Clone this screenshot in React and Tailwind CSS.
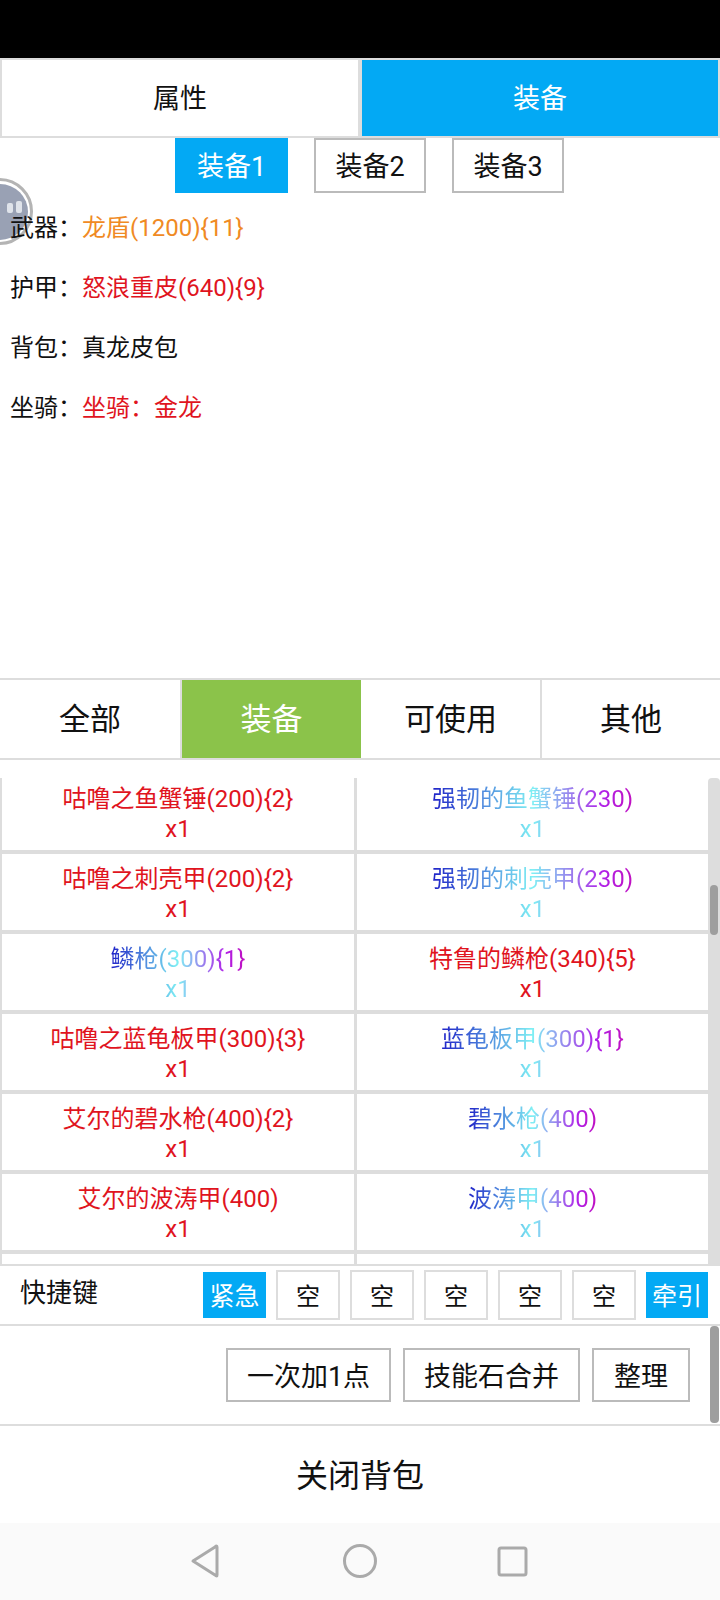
const items = [
  [["咕噜之鱼蟹锤(200){2}", "red"], ["强韧的鱼蟹锤(230)", "rare"]],
  [["咕噜之刺壳甲(200){2}", "red"], ["强韧的刺壳甲(230)", "rare"]],
  [["鳞枪(300){1}", "rare"], ["特鲁的鳞枪(340){5}", "red"]],
  [["咕噜之蓝龟板甲(300){3}", "red"], ["蓝龟板甲(300){1}", "rare"]],
  [["艾尔的碧水枪(400){2}", "red"], ["碧水枪(400)", "rare"]],
  [["艾尔的波涛甲(400)", "red"], ["波涛甲(400)", "rare"]],
]

const equipped = [
  ["武器：", "龙盾(1200){11}", "text-[#f08a24]"],
  ["护甲：", "怒浪重皮(640){9}", "text-[#e0141e]"],
  ["背包：", "真龙皮包", "text-[#111]"],
  ["坐骑：", "坐骑：金龙", "text-[#e0141e]"],
]

function ItemCell({ name, kind, className }) {
  const color =
    kind === "red"
      ? "text-[#e0141e]"
      : "bg-[linear-gradient(to_right,#1f22c8,#7ff0f4_50%,#b020e8_85%,#c010c0)] bg-clip-text text-transparent"
  return (
    <div className={`flex items-start justify-center bg-white ${className}`}>
      <div className={`inline-block text-center text-2xl leading-[30px] ${color}`}>
        <div>{name}</div>
        <div>x1</div>
      </div>
    </div>
  )
}

function OutlineButton({ children, className = "" }) {
  return (
    <div className={`flex items-center justify-center border-2 border-[#bbb] pt-[4px] text-[27px] text-[#111] ${className}`}>
      {children}
    </div>
  )
}

function KeySlot({ label, active, width }) {
  return active ? (
    <div className={`mt-[2px] flex h-[46px] items-center justify-center bg-[#03a9f4] pt-[3px] text-[25px] text-white ${width}`}>{label}</div>
  ) : (
    <div className="flex h-[50px] w-[64px] items-center justify-center border-2 border-[#ddd] pt-[3px] text-2xl text-[#111]">{label}</div>
  )
}

export default function App() {
  return (
    <div className="relative h-[1600px] w-[720px] overflow-hidden bg-white font-['Roboto','Noto_Sans_CJK_SC',sans-serif] text-[#111]">
      <div className="h-[58px] bg-black" />

      {/* top tabs */}
      <div className="flex h-[80px] border-y-2 border-[#ddd]">
        <div className="flex w-[358px] items-center justify-center border-l-2 border-[#ddd] pt-[2px] text-[27px]">属性</div>
        <div className="w-1 bg-[#ddd]" />
        <div className="flex w-[356px] items-center justify-center bg-[#03a9f4] pt-[2px] text-[27px] text-white">装备</div>
        <div className="w-[2px] bg-[#ddd]" />
      </div>

      <div className="flex h-[55px] pl-[175px]">
        <div className="flex w-[113px] items-center justify-center bg-[#03a9f4] pt-[4px] text-[27px] text-white">装备1</div>
        <OutlineButton className="ml-[26px] w-[112px]">装备2</OutlineButton>
        <OutlineButton className="ml-[26px] w-[112px]">装备3</OutlineButton>
      </div>

      {/* equipped list */}
      <div className="relative z-10 h-[485px] pl-[10px] pt-[4px]">
        {equipped.map(([label, value, color]) => (
          <div key={label} className="flex h-[60px] items-center pt-[2px] text-2xl">
            <span className="w-[72px]">{label}</span>
            <span className={color}>{value}</span>
          </div>
        ))}
      </div>

      {/* filter tabs */}
      <div className="flex h-[82px] border-y-2 border-[#ddd] pt-0 text-[31px]">
        <div className="flex w-[182px] items-center justify-center border-r-2 border-[#ddd] pt-[2px]">全部</div>
        <div className="flex w-[179px] items-center justify-center bg-[#8bc34a] pt-[2px] text-white">装备</div>
        <div className="flex w-[181px] items-center justify-center border-r-2 border-[#ddd] pt-[2px]">可使用</div>
        <div className="flex w-[178px] items-center justify-center pt-[2px]">其他</div>
      </div>

      {/* bag grid */}
      <div className="mt-[18px] flex h-[486px]">
        <div className="w-[708px] overflow-hidden bg-[#ddd] pl-[2px]">
          <div className="flex flex-col gap-1">
            {items.map((row, i) => (
              <div key={i} className={`flex gap-[3px] ${i === 0 ? "h-[72px]" : "h-[76px]"}`}>
                <ItemCell name={row[0][0]} kind={row[0][1]} className={`w-[352px] ${i === 0 ? "pt-[6px]" : "pt-[10px]"}`} />
                <ItemCell name={row[1][0]} kind={row[1][1]} className={`w-[351px] ${i === 0 ? "pt-[6px]" : "pt-[10px]"}`} />
              </div>
            ))}
            <div className="flex h-[10px] gap-[3px]">
              <div className="w-[352px] bg-white" />
              <div className="w-[351px] bg-white" />
            </div>
          </div>
        </div>
        <div className="relative w-[12px] rounded-t-[4px] bg-[#ddd]">
          <div className="absolute left-[2px] top-[107px] h-[50px] w-[8px] rounded-[4px] bg-[#9e9e9e]" />
        </div>
      </div>

      {/* shortcut keys */}
      <div className="flex h-[62px] border-y-2 border-[#ddd] pt-[4px]">
        <div className="w-[203px] pl-[20px] pt-[5px] text-[26px] leading-[36px]">快捷键</div>
        <div className="flex gap-[10px]">
          <KeySlot label="紧急" active width="w-[63px]" />
          {[0, 1, 2, 3, 4].map((n) => (
            <KeySlot key={n} label="空" />
          ))}
          <KeySlot label="牵引" active width="w-[62px]" />
        </div>
      </div>

      {/* actions */}
      <div className="relative flex h-[98px] items-center justify-end pr-[30px]">
        <OutlineButton className="h-[54px] w-[165px]">一次加1点</OutlineButton>
        <OutlineButton className="ml-[12px] h-[54px] w-[177px]">技能石合并</OutlineButton>
        <OutlineButton className="ml-[12px] h-[54px] w-[98px]">整理</OutlineButton>
        <div className="absolute right-[1px] top-0 h-[97px] w-[9px] rounded-[4px] bg-[#9e9e9e]" />
      </div>

      <div className="flex h-[99px] items-center justify-center border-t-2 border-[#ddd] pt-[2px] text-[32px]">关闭背包</div>

      {/* android nav bar */}
      <div className="relative h-[77px] bg-[#fafafa]">
        <svg width="720" height="77" viewBox="0 0 720 77" fill="none" stroke="#aaa" strokeWidth="3" strokeLinejoin="round">
          <path d="M217 24 V52 Q217 54 215 52 L193 38 L215 24 Q217 22 217 24 Z" />
          <ellipse cx="360" cy="38" rx="15.5" ry="15.5" />
          <rect x="499" y="25" width="27" height="27" rx="2" />
        </svg>
      </div>

      {/* floating assistive ball */}
      <div className="absolute left-[-34px] top-[178px] flex h-[67px] w-[67px] items-center justify-center rounded-full border-[3px] border-[#b4b4b4] bg-white/60">
        <div className="h-[56px] w-[56px] rounded-full bg-[#99a1b4]" />
        <div className="absolute left-[38px] top-[22px] h-[10px] w-[6px] rounded-[2px] bg-[#dfe3ea]" />
        <div className="absolute left-[47px] top-[20px] h-[12px] w-[6px] rounded-[2px] bg-[#dfe3ea]" />
      </div>
    </div>
  )
}
